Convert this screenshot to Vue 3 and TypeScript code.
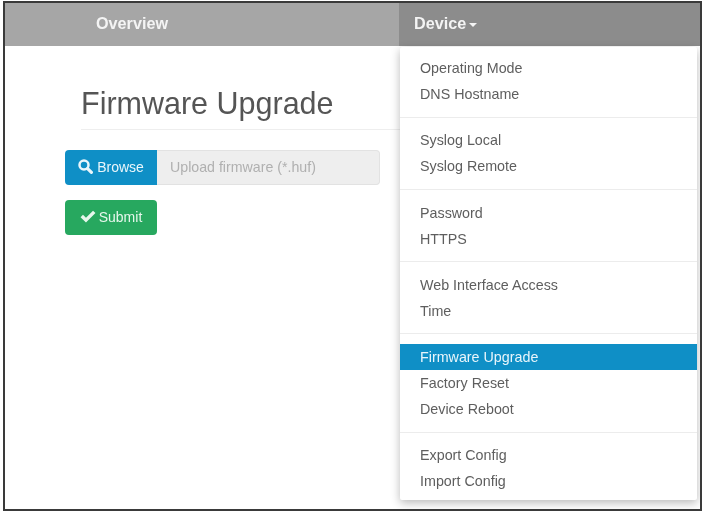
<script setup lang="ts">
const groups: string[][] = [
  ['Operating Mode', 'DNS Hostname'],
  ['Syslog Local', 'Syslog Remote'],
  ['Password', 'HTTPS'],
  ['Web Interface Access', 'Time'],
  ['Firmware Upgrade', 'Factory Reset', 'Device Reboot'],
  ['Export Config', 'Import Config'],
]
const active = 'Firmware Upgrade'
</script>

<template>
  <div class="frame">
    <nav class="navbar">
      <a class="tab overview">Overview</a>
      <a class="tab device">Device<span class="caret"></span></a>
    </nav>
    <main class="content">
      <h1 class="title">Firmware Upgrade</h1>
      <div class="upload">
        <button class="btn browse" type="button">
          <svg class="icon" width="15" height="15" viewBox="0 0 15 15" aria-hidden="true">
            <circle cx="6" cy="6" r="4.5" fill="none" stroke="currentColor" stroke-width="2.5" />
            <path d="M9.6 9.6 L13.4 13.4" stroke="currentColor" stroke-width="3.2" stroke-linecap="round" />
          </svg>
          Browse
        </button>
        <div class="file">Upload firmware (*.huf)</div>
      </div>
      <button class="btn submit" type="button">
        <svg class="icon" width="16" height="13" viewBox="0 0 15 12" aria-hidden="true">
          <path d="M0.5 6.6 L2.8 4.3 L5.6 7.1 L12.2 0.5 L14.5 2.8 L5.6 11.7 Z" fill="currentColor" />
        </svg>
        Submit
      </button>
    </main>
    <div class="menu">
      <div v-for="(group, i) in groups" :key="i" class="group">
        <a
          v-for="item in group"
          :key="item"
          class="item"
          :class="{ active: item === active }"
        >{{ item }}</a>
      </div>
    </div>
  </div>
</template>

<style>
html, body { margin: 0; background: #fff; }
</style>

<style scoped>
.frame {
  position: relative;
  box-sizing: border-box;
  width: 699px;
  height: 510px;
  margin: 1px 0 0 3px;
  border: 2px solid #3a3a3a;
  background: #fff;
  font-family: "Liberation Sans", Arial, sans-serif;
  overflow: hidden;
  filter: blur(0.35px);
}
.navbar {
  display: flex;
  height: 43px;
  background: #a6a6a6;
}
.tab {
  display: flex;
  align-items: center;
  padding-bottom: 2px;
  box-sizing: border-box;
  color: #f4f4f4;
  font-weight: 700;
  font-size: 16.2px;
}
.overview {
  width: 394px;
  padding-left: 91px;
}
.device {
  flex: 1;
  padding-left: 15px;
  background: #8c8c8c;
}
.caret {
  width: 0;
  height: 0;
  margin-left: 3px;
  margin-top: 2px;
  border-left: 4px solid transparent;
  border-right: 4px solid transparent;
  border-top: 4px solid #f4f4f4;
}
.content {
  padding: 38px 0 0 60px;
}
.title {
  margin: 0 0 20px 16px;
  padding-bottom: 6px;
  width: 319px;
  border-bottom: 1px solid #eee;
  color: #555;
  font-size: 30.5px;
  font-weight: 400;
  line-height: 39px;
}
.upload {
  display: flex;
  width: 315px;
  height: 35px;
}
.btn {
  display: flex;
  align-items: center;
  justify-content: center;
  gap: 3px;
  width: 92px;
  height: 35px;
  padding: 0 0 2px;
  border: 0;
  border-radius: 4px;
  color: #fff;
  font-family: inherit;
  font-size: 14px;
}
.browse {
  gap: 4px;
  background: #0f8fc6;
  border-radius: 4px 0 0 4px;
  flex: none;
  color: #eaf6fb;
}
.file {
  flex: 1;
  display: flex;
  align-items: center;
  padding: 0 0 2px 13px;
  background: #eee;
  border: 1px solid #e2e2e2;
  border-left: 0;
  border-radius: 0 4px 4px 0;
  color: #b0b0b0;
  font-size: 14.2px;
}
.submit {
  margin-top: 15px;
  background: #27a85f;
  color: #e6f7ec;
}
.menu {
  position: absolute;
  left: 395px;
  top: 44px;
  width: 297px;
  height: 453px;
  box-sizing: border-box;
  padding-top: 8px;
  background: #fff;
  box-shadow: 0 3px 10px rgba(0, 0, 0, 0.28);
  border-radius: 2px;
}
.group {
  padding-bottom: 9.5px;
  margin-bottom: 9.75px;
  border-bottom: 1px solid #ececec;
}
.group:last-child {
  border-bottom: 0;
  margin-bottom: 0;
  padding-bottom: 0;
}
.item {
  display: flex;
  align-items: center;
  height: 26px;
  padding-left: 20px;
  color: #5e5e5e;
  font-size: 14.3px;
}
.item.active {
  background: #0f8fc6;
  color: #e8f5fb;
}
</style>
